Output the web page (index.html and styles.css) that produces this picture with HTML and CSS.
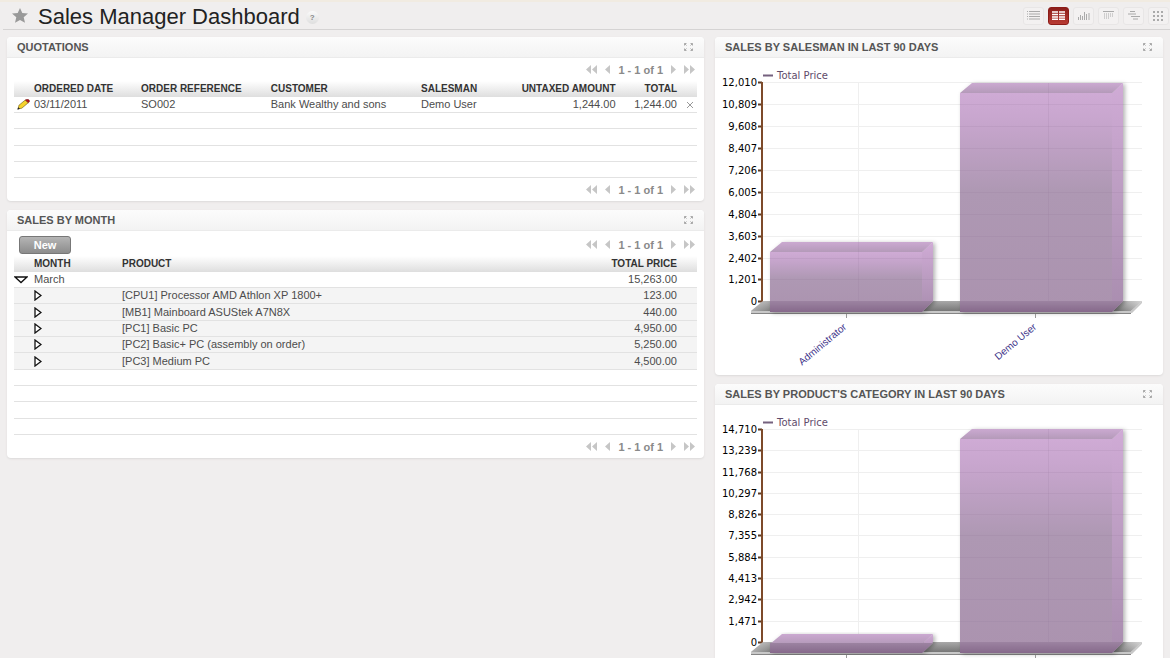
FILE: index.html
```html
<!DOCTYPE html>
<html lang="en">
<head>
<meta charset="utf-8">
<title>Sales Manager Dashboard</title>
<link rel="stylesheet" href="styles.css">
</head>
<body>
<svg class="defs" aria-hidden="true">
  <defs>
    <linearGradient id="front" x1="0" y1="0" x2="0" y2="1"><stop offset="0" stop-color="#cfabd5"/><stop offset=".12" stop-color="#c8a6ce"/><stop offset=".45" stop-color="#ae98b3"/><stop offset="1" stop-color="#ab93af"/></linearGradient>
    <linearGradient id="side" x1="0" y1="0" x2="0" y2="1"><stop offset="0" stop-color="#d0abd6"/><stop offset=".55" stop-color="#b99bbf"/><stop offset="1" stop-color="#a98daf"/></linearGradient>
    <linearGradient id="lid" x1="0" y1="0" x2="0" y2="1"><stop offset="0" stop-color="#cba9d1"/><stop offset="1" stop-color="#b49ab9"/></linearGradient>
    <linearGradient id="foot" x1="0" y1="0" x2="0" y2="1"><stop offset="0" stop-color="#9c83a1"/><stop offset="1" stop-color="#86698b"/></linearGradient>
    <linearGradient id="floor" x1="0" y1="0" x2="0" y2="1"><stop offset="0" stop-color="#a9a9a9"/><stop offset="1" stop-color="#777"/></linearGradient>
    <linearGradient id="floor-ends"><stop offset="0" stop-color="#fff" stop-opacity=".4"/><stop offset=".06" stop-color="#fff" stop-opacity="0"/><stop offset=".94" stop-color="#fff" stop-opacity="0"/><stop offset="1" stop-color="#fff" stop-opacity=".5"/></linearGradient>
    <filter id="shade" x="-10%" y="-10%" width="120%" height="120%"><feDropShadow dx="2" dy="1" stdDeviation="2" flood-color="#000" flood-opacity=".3"/></filter>
  </defs>
  <symbol id="first" viewBox="0 0 11 9"><path d="M5 0v9L0 4.500zM11 0v9L6 4.500z"/></symbol>
  <symbol id="prev" viewBox="0 0 5 9"><path d="M5 0v9L0 4.500z"/></symbol>
  <symbol id="next" viewBox="0 0 5 9"><path d="M0 0v9l5-4.500z"/></symbol>
  <symbol id="last" viewBox="0 0 11 9"><path d="M0 0v9l5-4.500zM6 0v9l5-4.500z"/></symbol>
  <symbol id="expand" viewBox="0 0 9 8"><path fill="none" stroke="#aaa" d="M.5 2.500v-2h2M.5.5l2 2M6.500.5h2v2M8.500.5l-2 2M.5 5.500v2h2M.5 7.500l2-2M8.500 5.500v2h-2M8.500 7.500l-2-2"/></symbol>
  <symbol id="closed" viewBox="0 0 8 11"><path fill="#fff" stroke="#111" stroke-width="1.300" d="M1 1l6 4.500L1 10z"/></symbol>
  <symbol id="open" viewBox="0 0 14 8"><path fill="#fff" stroke="#111" stroke-width="1.300" d="M1 1h12L7 6.500z"/></symbol>
</svg>

<header class="topbar">
  <button class="star" aria-label="Add to shortcuts"><svg width="16" height="15" viewBox="0 0 16 15"><path fill="#999" d="M8 0l2.300 5.100 5.700.5-4.300 3.700 1.300 5.500L8 12l-5 2.800 1.300-5.500L0 5.600l5.700-.5z"/></svg></button>
  <h1>Sales Manager Dashboard</h1>
  <button class="help">?</button>
  <nav class="views" aria-label="Views">
    <button class="view" aria-label="List"><svg width="13" height="9" viewBox="0 0 13 9"><path stroke="#aaa" d="M0 .5h1M2 .5h11M0 3h1M2 3h11M0 5.500h1M2 5.500h11M0 8h1M2 8h11"/></svg></button>
    <button class="view view-on" aria-label="Form"><svg width="13" height="9" viewBox="0 0 13 9"><path stroke="#fff" stroke-width="1.400" d="M0 1h6M7 1h6M0 3.500h6M7 3.500h6M0 6h6M7 6h6M0 8.300h6M7 8.300h6"/></svg></button>
    <button class="view" aria-label="Graph"><svg width="12" height="9" viewBox="0 0 12 9"><path stroke="#aaa" d="M.5 6v3M2.500 4v5M4.500 5v4M6.500 1v8M8.500 3v6M11 2v7"/></svg></button>
    <button class="view" aria-label="Calendar"><svg width="11" height="9" viewBox="0 0 11 9"><path stroke="#aaa" fill="none" d="M0 .5h11"/><path stroke="#aaa" stroke-dasharray="1 1" d="M1 3h9M1 5h9M1 7h5"/></svg></button>
    <button class="view" aria-label="Gantt"><svg width="12" height="9" viewBox="0 0 12 9"><path stroke="#aaa" d="M2 .5h5M0 3h8M3 5.500h9M5 8h5"/></svg></button>
    <button class="view" aria-label="Diagram"><svg width="11" height="10" viewBox="0 0 11 10"><path stroke="#aaa" stroke-width="2" stroke-dasharray="2 2" d="M0 1h11M0 5h11M0 9h11"/></svg></button>
  </nav>
</header>

<main class="board">
  <div class="column">
    <section class="panel">
      <div class="panel-head"><h2>Quotations</h2><button class="expand" aria-label="Expand"><svg width="9" height="8"><use href="#expand"/></svg></button></div>
      <div class="panel-body">
        <div class="tools">
          <div class="pager"><button aria-label="First"><svg width="11" height="9"><use href="#first"/></svg></button><button aria-label="Previous"><svg width="5" height="9"><use href="#prev"/></svg></button><span>1 - 1 of 1</span><button aria-label="Next"><svg width="5" height="9"><use href="#next"/></svg></button><button aria-label="Last"><svg width="11" height="9"><use href="#last"/></svg></button></div>
        </div>
        <table class="list orders">
          <colgroup><col class="c-edit"><col class="c-date"><col class="c-ref"><col class="c-customer"><col class="c-salesman"><col class="c-untaxed"><col class="c-total"><col class="c-end"></colgroup>
          <thead><tr><th></th><th>Ordered Date</th><th>Order Reference</th><th>Customer</th><th>Salesman</th><th class="num">Untaxed Amount</th><th class="num">Total</th><th></th></tr></thead>
          <tbody>
            <tr><td class="edit"><button aria-label="Edit"><svg width="13" height="11" viewBox="0 0 13 11"><path fill="#f6d32d" stroke="#6b5714" stroke-width=".6" d="M1 10l1-3.800L8.300 1l3 2.700L4.800 9.200z"/><path fill="#222" d="M.3 10.800L1.200 8.300l1.800 1.500z"/><path fill="#b3131b" stroke="#610a0e" stroke-width=".4" d="M8.300 1.100L9.800.3q2.900-.1 2.800 2.300L11.300 3.700z"/></svg></button></td><td>03/11/2011</td><td>SO002</td><td>Bank Wealthy and sons</td><td>Demo User</td><td class="num">1,244.00</td><td class="num">1,244.00</td><td class="delete"><button aria-label="Delete"><svg width="6" height="6" viewBox="0 0 6 6"><path stroke="#999" d="M0 0l6 6M6 0L0 6"/></svg></button></td></tr>
            <tr><td colspan="8"></td></tr>
            <tr><td colspan="8"></td></tr>
            <tr><td colspan="8"></td></tr>
            <tr><td colspan="8"></td></tr>
          </tbody>
        </table>
        <div class="tools">
          <div class="pager"><button aria-label="First"><svg width="11" height="9"><use href="#first"/></svg></button><button aria-label="Previous"><svg width="5" height="9"><use href="#prev"/></svg></button><span>1 - 1 of 1</span><button aria-label="Next"><svg width="5" height="9"><use href="#next"/></svg></button><button aria-label="Last"><svg width="11" height="9"><use href="#last"/></svg></button></div>
        </div>
      </div>
    </section>

    <section class="panel">
      <div class="panel-head"><h2>Sales by Month</h2><button class="expand" aria-label="Expand"><svg width="9" height="8"><use href="#expand"/></svg></button></div>
      <div class="panel-body">
        <div class="tools tools-tall">
          <button class="new">New</button>
          <div class="pager"><button aria-label="First"><svg width="11" height="9"><use href="#first"/></svg></button><button aria-label="Previous"><svg width="5" height="9"><use href="#prev"/></svg></button><span>1 - 1 of 1</span><button aria-label="Next"><svg width="5" height="9"><use href="#next"/></svg></button><button aria-label="Last"><svg width="11" height="9"><use href="#last"/></svg></button></div>
        </div>
        <table class="list months">
          <colgroup><col class="c-edit"><col class="c-month"><col><col class="c-price"><col class="c-end"></colgroup>
          <thead><tr><th></th><th>Month</th><th>Product</th><th class="num">Total Price</th><th></th></tr></thead>
          <tbody>
            <tr><td><button aria-label="Collapse"><svg width="14" height="8"><use href="#open"/></svg></button></td><td>March</td><td></td><td class="num">15,263.00</td><td></td></tr>
            <tr class="child"><td></td><td><button aria-label="Expand"><svg width="8" height="11"><use href="#closed"/></svg></button></td><td>[CPU1] Processor AMD Athlon XP 1800+</td><td class="num">123.00</td><td></td></tr>
            <tr class="child"><td></td><td><button aria-label="Expand"><svg width="8" height="11"><use href="#closed"/></svg></button></td><td>[MB1] Mainboard ASUStek A7N8X</td><td class="num">440.00</td><td></td></tr>
            <tr class="child"><td></td><td><button aria-label="Expand"><svg width="8" height="11"><use href="#closed"/></svg></button></td><td>[PC1] Basic PC</td><td class="num">4,950.00</td><td></td></tr>
            <tr class="child"><td></td><td><button aria-label="Expand"><svg width="8" height="11"><use href="#closed"/></svg></button></td><td>[PC2] Basic+ PC (assembly on order)</td><td class="num">5,250.00</td><td></td></tr>
            <tr class="child"><td></td><td><button aria-label="Expand"><svg width="8" height="11"><use href="#closed"/></svg></button></td><td>[PC3] Medium PC</td><td class="num">4,500.00</td><td></td></tr>
            <tr><td colspan="5"></td></tr>
            <tr><td colspan="5"></td></tr>
            <tr><td colspan="5"></td></tr>
            <tr><td colspan="5"></td></tr>
          </tbody>
        </table>
        <div class="tools">
          <div class="pager"><button aria-label="First"><svg width="11" height="9"><use href="#first"/></svg></button><button aria-label="Previous"><svg width="5" height="9"><use href="#prev"/></svg></button><span>1 - 1 of 1</span><button aria-label="Next"><svg width="5" height="9"><use href="#next"/></svg></button><button aria-label="Last"><svg width="11" height="9"><use href="#last"/></svg></button></div>
        </div>
      </div>
    </section>
  </div>

  <div class="column">
    <section class="panel">
      <div class="panel-head"><h2>Sales by Salesman in last 90 days</h2><button class="expand" aria-label="Expand"><svg width="9" height="8"><use href="#expand"/></svg></button></div>
      <svg class="chart" viewBox="0 0 448 317">
        <path class="grid" d="M48 24.500H427M48 46.500H427M48 68.500H427M48 90.500H427M48 112.500H427M48 134.500H427M48 156.500H427M48 178.500H427M48 200.500H427M48 221.500H427M143.500 24V243M333.500 24V243"/>
        <path class="legend" d="M48 17.500h10"/><text class="legend-text" x="62" y="21">Total Price</text>
        <g class="ticks"><text x="42" y="28">12,010</text><text x="42" y="50">10,809</text><text x="42" y="72">9,608</text><text x="42" y="94">8,407</text><text x="42" y="116">7,206</text><text x="42" y="138">6,005</text><text x="42" y="160">4,804</text><text x="42" y="182">3,603</text><text x="42" y="204">2,402</text><text x="42" y="225">1,201</text><text x="42" y="247">0</text></g>
        <path class="marks" d="M43 24.500h4M43 46.500h4M43 68.500h4M43 90.500h4M43 112.500h4M43 134.500h4M43 156.500h4M43 178.500h4M43 200.500h4M43 221.500h4M43 243.500h4"/>
        <path class="axis" d="M47 24v220"/>
        <path fill="url(#floor)" d="M48 243H427L416 253H36z"/><path fill="url(#floor-ends)" d="M48 243H427L416 253H36z"/>
        <path fill="#c8c8c8" d="M36 253H416L427 243V245L417 255H36z"/><path fill="#858585" d="M36 255H416v1H36z"/>
        <g filter="url(#shade)"><path fill="url(#side)" d="M207 194l11-10v59l-11 11z"/><path fill="url(#lid)" d="M55 194l12-10h151l-11 10z"/><path fill="url(#front)" d="M55 194h152v60H55z"/><path fill="url(#foot)" d="M55 243h163l-11 11H55z"/></g>
        <g filter="url(#shade)"><path fill="url(#side)" d="M397 35l11-10v218l-11 11z"/><path fill="url(#lid)" d="M245 35l12-10h151l-11 10z"/><path fill="url(#front)" d="M245 35h152v219H245z"/><path fill="url(#foot)" d="M245 243h163l-11 11H245z"/></g>
        <path class="over" d="M143.500 184v59M333.500 25v218M245 46.500h163M245 68.500h163M245 90.500h163M245 112.500h163M245 134.500h163M245 156.500h163M245 178.500h163M245 200.500h163M245 221.500h163M55 200.500h163M55 221.500h163"/>
        <path class="names-mark" d="M131.500 256v4M320.500 256v4"/>
        <g class="names"><text transform="translate(132 270) rotate(-40)">Administrator</text><text transform="translate(322 270) rotate(-40)">Demo User</text></g>
      </svg>
    </section>

    <section class="panel">
      <div class="panel-head"><h2>Sales by Product's Category in last 90 days</h2><button class="expand" aria-label="Expand"><svg width="9" height="8"><use href="#expand"/></svg></button></div>
      <svg class="chart" viewBox="0 0 448 317">
        <path class="grid" d="M48 24.500H427M48 45.500H427M48 67.500H427M48 88.500H427M48 109.500H427M48 130.500H427M48 152.500H427M48 173.500H427M48 194.500H427M48 216.500H427M143.500 24V237M333.500 24V237"/>
        <path class="legend" d="M48 17.500h10"/><text class="legend-text" x="62" y="21">Total Price</text>
        <g class="ticks"><text x="42" y="28">14,710</text><text x="42" y="49">13,239</text><text x="42" y="71">11,768</text><text x="42" y="92">10,297</text><text x="42" y="113">8,826</text><text x="42" y="134">7,355</text><text x="42" y="156">5,884</text><text x="42" y="177">4,413</text><text x="42" y="198">2,942</text><text x="42" y="220">1,471</text><text x="42" y="241">0</text></g>
        <path class="marks" d="M43 24.500h4M43 45.500h4M43 67.500h4M43 88.500h4M43 109.500h4M43 130.500h4M43 152.500h4M43 173.500h4M43 194.500h4M43 216.500h4M43 237.500h4"/>
        <path class="axis" d="M47 24v214"/>
        <path fill="url(#floor)" d="M48 237H427L416 247H36z"/><path fill="url(#floor-ends)" d="M48 237H427L416 247H36z"/>
        <path fill="#c8c8c8" d="M36 247H416L427 237V239L417 249H36z"/><path fill="#858585" d="M36 249H416v1H36z"/>
        <g filter="url(#shade)"><path fill="url(#side)" d="M207 239l11-10v8l-11 11z"/><path fill="url(#lid)" d="M55 239l12-10h151l-11 10z"/><path fill="url(#foot)" d="M55 238h163l-11 10H55z"/></g>
        <g filter="url(#shade)"><path fill="url(#side)" d="M397 34l11-10v213l-11 11z"/><path fill="url(#lid)" d="M245 34l12-10h151l-11 10z"/><path fill="url(#front)" d="M245 34h152v214H245z"/><path fill="url(#foot)" d="M245 237h163l-11 11H245z"/></g>
        <path class="over" d="M333.500 24v213M245 45.500h163M245 67.500h163M245 88.500h163M245 109.500h163M245 130.500h163M245 152.500h163M245 173.500h163M245 194.500h163M245 216.500h163"/>
        <path class="names-mark" d="M131.500 250v4M320.500 250v4"/>
      </svg>
    </section>
  </div>
</main>
</body>
</html>
```

FILE: styles.css
```css
* { box-sizing: border-box; }
html { background: #f0eeee; }
body {
  display: flex;
  flex-direction: column;
  height: 100vh;
  margin: 0;
  border-top: 2px solid #f1ebe1;
  font: 11px/14px "Liberation Sans", Arial, sans-serif;
  color: #4c4c4c;
}
h1, h2 { margin: 0; }
button {
  padding: 0;
  border: 0;
  background: none;
  font: inherit;
  color: inherit;
  cursor: pointer;
}
svg { display: block; }
.defs { position: absolute; width: 0; height: 0; }

.topbar {
  display: flex;
  flex: none;
  align-items: center;
  height: 28px;
  margin-left: 3px;
  padding-left: 9px;
  border-bottom: 1px solid #d5d3d3;
}
.topbar h1 {
  margin: 2px 6px 0 10px;
  font-size: 22px;
  line-height: 26px;
  font-weight: normal;
  color: #222;
}
.help {
  width: 13px;
  height: 13px;
  margin-top: 4px;
  border-radius: 50%;
  background: linear-gradient(#fafafa, #dedede);
  font-size: 8px;
  line-height: 13px;
  font-weight: bold;
  color: #888;
}
.views { display: flex; gap: 4px; margin: 0 1px 0 auto; }
.view {
  display: flex;
  align-items: center;
  justify-content: center;
  width: 21px;
  height: 18px;
  border: 1px solid #e8e6e6;
  border-radius: 3px;
  background: #f3f1f1;
}
.view-on { border-color: #8c1c18; background: linear-gradient(#8c1f1b, #b83a33); }

.board {
  display: grid;
  flex: 1;
  grid-template-columns: 697fr 448fr;
  gap: 11px;
  align-items: start;
  min-height: 0;
  padding: 7px 7px 0;
  overflow-y: auto;
  scrollbar-width: none;
}
.column { display: grid; gap: 9px; min-width: 0; }
.panel {
  border-radius: 4px;
  background: #fff;
  box-shadow: 0 1px 2px #dcdada;
  overflow: hidden;
}
.panel-head {
  display: flex;
  align-items: center;
  justify-content: space-between;
  height: 21px;
  padding: 0 11px 0 10px;
  border-bottom: 1px solid #ebebeb;
  background: linear-gradient(#fcfcfc, #f3f3f3);
}
.panel-head h2 {
  font-size: 11px;
  line-height: 14px;
  text-transform: uppercase;
  color: #555;
}
.panel-body { padding: 0 7px; }

.tools { display: flex; align-items: center; height: 23px; padding: 0 2px 0 5px; }
.tools-tall { height: 25px; padding-top: 2px; }
.pager {
  display: flex;
  align-items: center;
  gap: 8px;
  margin-left: auto;
  font-weight: bold;
  color: #8a8a8a;
}
.pager svg { fill: #c6c6c6; }
.new {
  width: 52px;
  height: 18px;
  border: 1px solid #777;
  border-radius: 3px;
  background: linear-gradient(#b5b5b5, #8c8c8c);
  font-weight: bold;
  line-height: 14px;
  color: #fff;
}

.list { width: 100%; border-collapse: separate; border-spacing: 0; table-layout: fixed; }
.list th, .list td { padding: 0; text-align: left; white-space: nowrap; }
.list th {
  height: 16px;
  background: linear-gradient(#fff, #dedede);
  font-size: 10px;
  line-height: 14px;
  text-transform: uppercase;
  color: #333;
}
.list td { height: 16px; border-bottom: 1px solid #e2e2e2; line-height: 15px; }
.list tbody tr:nth-child(3n) td { height: 17px; }
.list .num { text-align: right; }
.list td button { display: block; }
.list .edit { padding-left: 3px; }
.list .delete button { margin-left: auto; margin-right: 4px; }
.child td { background: #f4f4f4; }
.c-edit, .c-end { width: 20px; }
.c-date { width: 107px; }
.c-ref { width: 19%; }
.c-customer { width: 22%; }
.c-salesman { width: 12%; }
.c-total { width: 9%; }
.c-month { width: 88px; }
.c-price { width: 20%; }

.chart { width: 100%; height: auto; }
.grid { stroke: #efefef; }
.over { stroke: #8d7394; stroke-opacity: .14; }
.axis { stroke: #7d4a2a; stroke-width: 2; }
.marks { stroke: #5d3a22; stroke-width: 2; }
.legend { stroke: #75617e; stroke-width: 2; }
.legend-text, .ticks { font: 10px "DejaVu Sans", sans-serif; }
.legend-text { fill: #5f4c6b; }
.ticks { text-anchor: end; fill: #000; }
.names { font: 10px "Liberation Sans", Arial, sans-serif; text-anchor: end; fill: #3b2f87; }
.names-mark { stroke: #999; }
```
